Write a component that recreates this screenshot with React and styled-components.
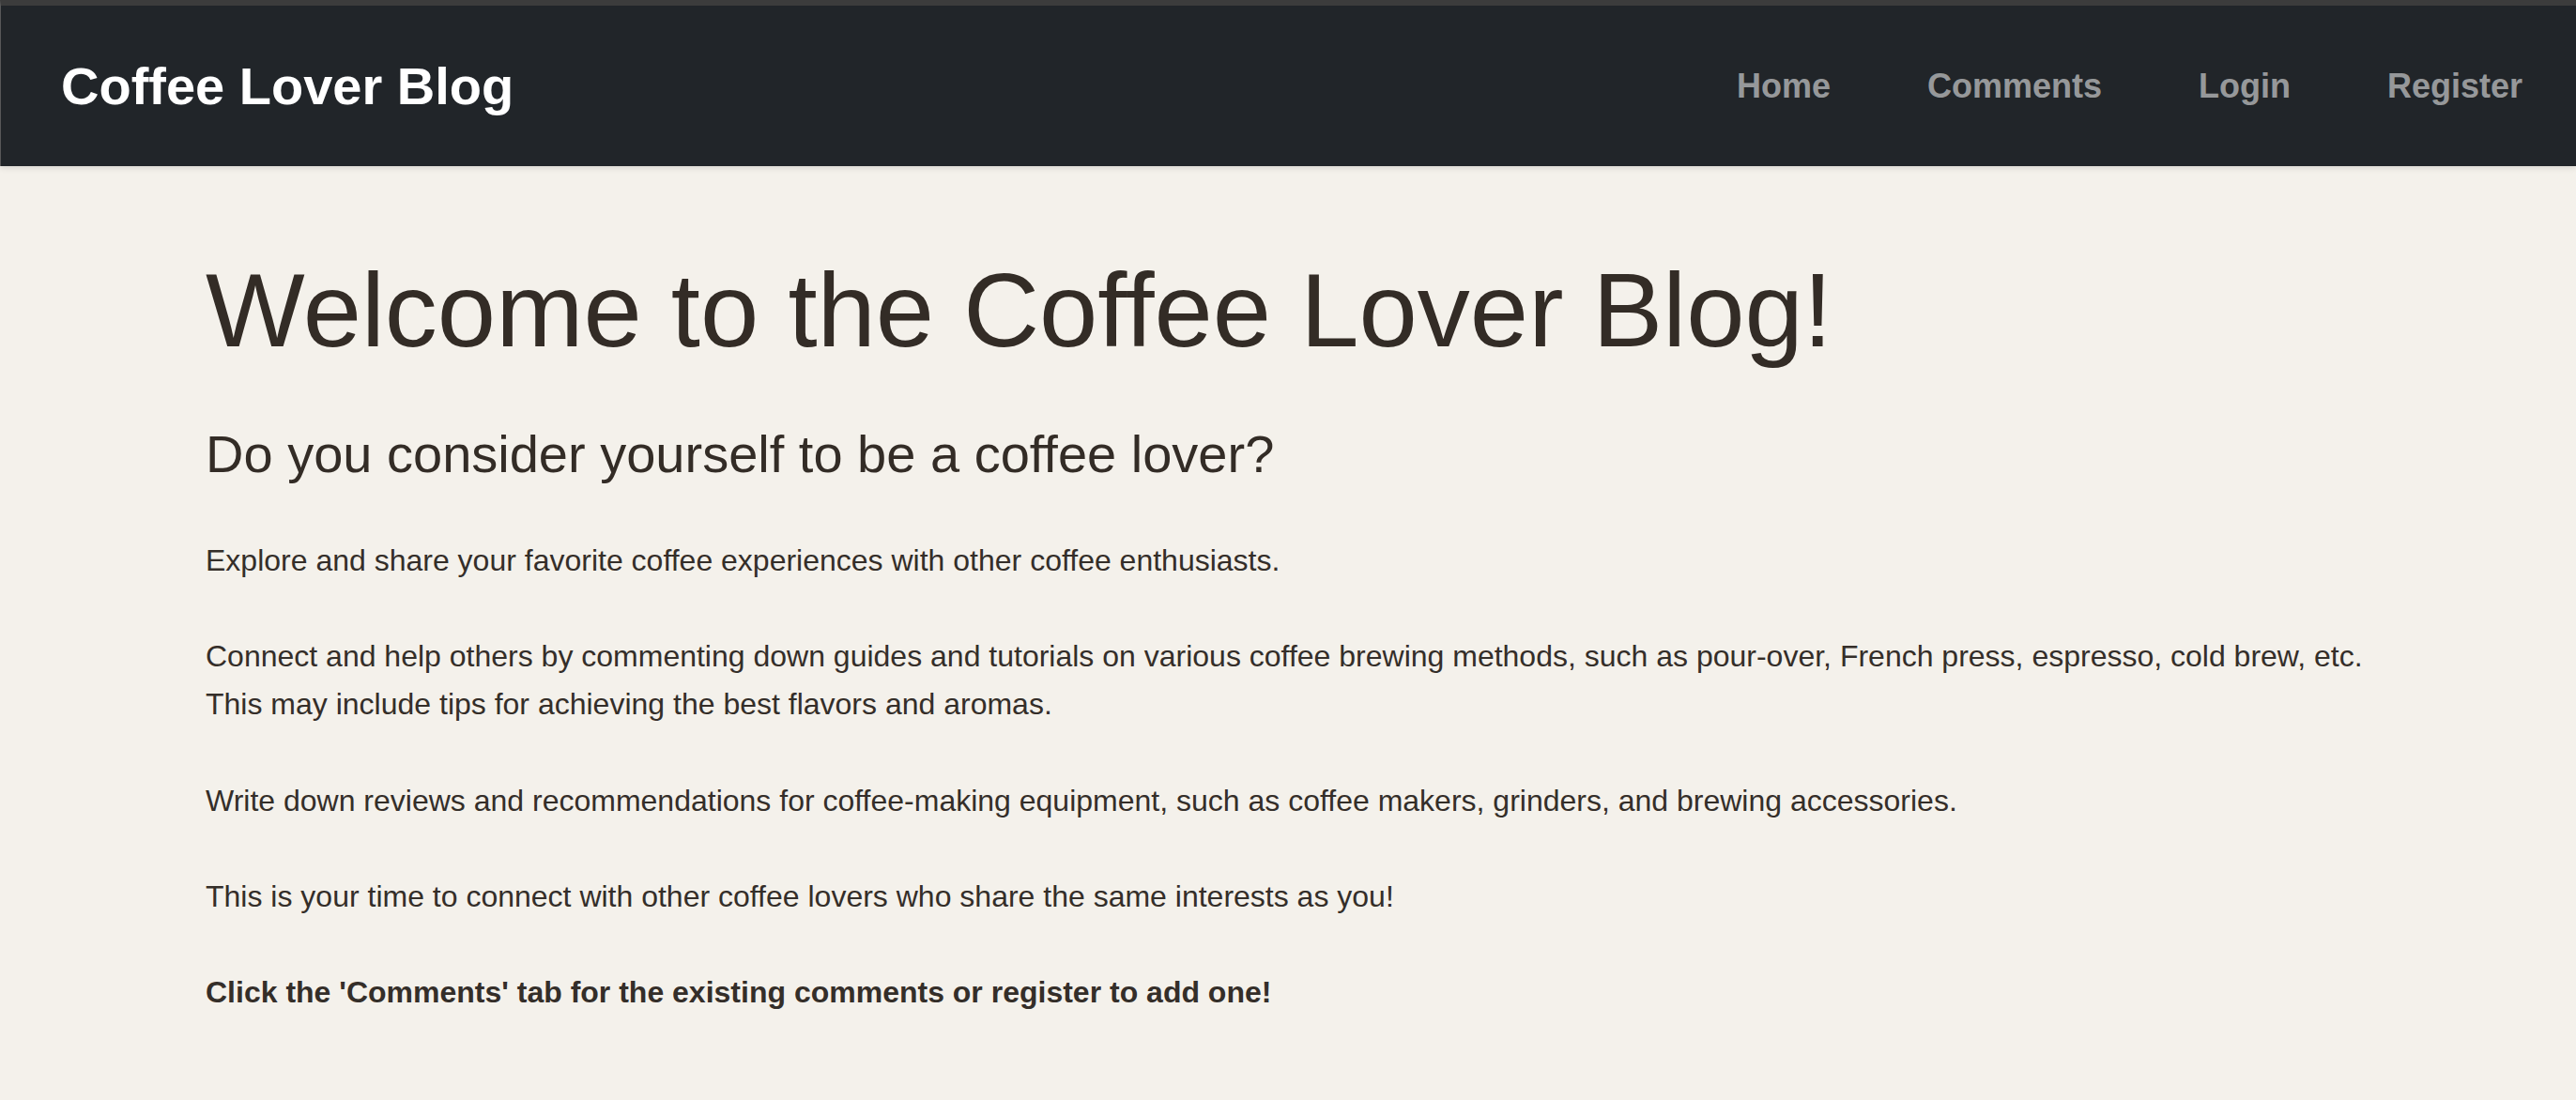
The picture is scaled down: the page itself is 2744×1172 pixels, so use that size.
import React from "react";
import styled, { createGlobalStyle } from "styled-components";

const GlobalStyle = createGlobalStyle`
  html, body {
    margin: 0;
    padding: 0;
    background: #f4f1eb;
    font-family: "Liberation Sans", Arial, Helvetica, sans-serif;
    color: #342e29;
  }
`;

const Navbar = styled.nav`
  display: flex;
  align-items: center;
  justify-content: space-between;
  height: 171px;
  background: #212529;
  border-top: 6px solid #3c3c3c;
  border-left: 1px solid #585858;
  box-shadow: 0 2px 6px rgba(0, 0, 0, 0.12);
  padding: 0 57px 0 64px;
`;

const Brand = styled.a`
  font-size: 56px;
  font-weight: 700;
  color: #ffffff;
  text-decoration: none;
`;

const NavLinks = styled.div`
  display: flex;
  gap: 103px;
`;

const NavLink = styled.a`
  font-size: 36px;
  font-weight: 700;
  color: rgba(255, 255, 255, 0.55);
  text-decoration: none;
`;

const Main = styled.main`
  padding: 87px 219px 40px;
`;

const Title = styled.h1`
  margin: 0 0 52px;
  font-size: 112px;
  font-weight: 300;
  line-height: 1.2;
  color: #332c26;
`;

const Subtitle = styled.h2`
  margin: 0 0 54px;
  font-size: 56px;
  font-weight: 400;
  line-height: 1.2;
  color: #332c26;
`;

const Para = styled.p`
  margin: 0 0 51.2px;
  font-size: 32px;
  line-height: 51.2px;
  font-weight: ${(p) => (p.$bold ? 700 : 400)};
`;

const links = ["Home", "Comments", "Login", "Register"];

function App() {
  return (
    <>
      <GlobalStyle />
      <Navbar>
        <Brand href="#">Coffee Lover Blog</Brand>
        <NavLinks>
          {links.map((l) => (
            <NavLink key={l} href="#">
              {l}
            </NavLink>
          ))}
        </NavLinks>
      </Navbar>
      <Main>
        <Title>Welcome to the Coffee Lover Blog!</Title>
        <Subtitle>Do you consider yourself to be a coffee lover?</Subtitle>
        <Para>
          Explore and share your favorite coffee experiences with other coffee
          enthusiasts.
        </Para>
        <Para>
          Connect and help others by commenting down guides and tutorials on
          various coffee brewing methods, such as pour-over, French press,
          espresso, cold brew, etc. This may include tips for achieving the
          best flavors and aromas.
        </Para>
        <Para>
          Write down reviews and recommendations for coffee-making equipment,
          such as coffee makers, grinders, and brewing accessories.
        </Para>
        <Para>
          This is your time to connect with other coffee lovers who share the
          same interests as you!
        </Para>
        <Para $bold>
          Click the 'Comments' tab for the existing comments or register to add
          one!
        </Para>
      </Main>
    </>
  );
}

export default App;
